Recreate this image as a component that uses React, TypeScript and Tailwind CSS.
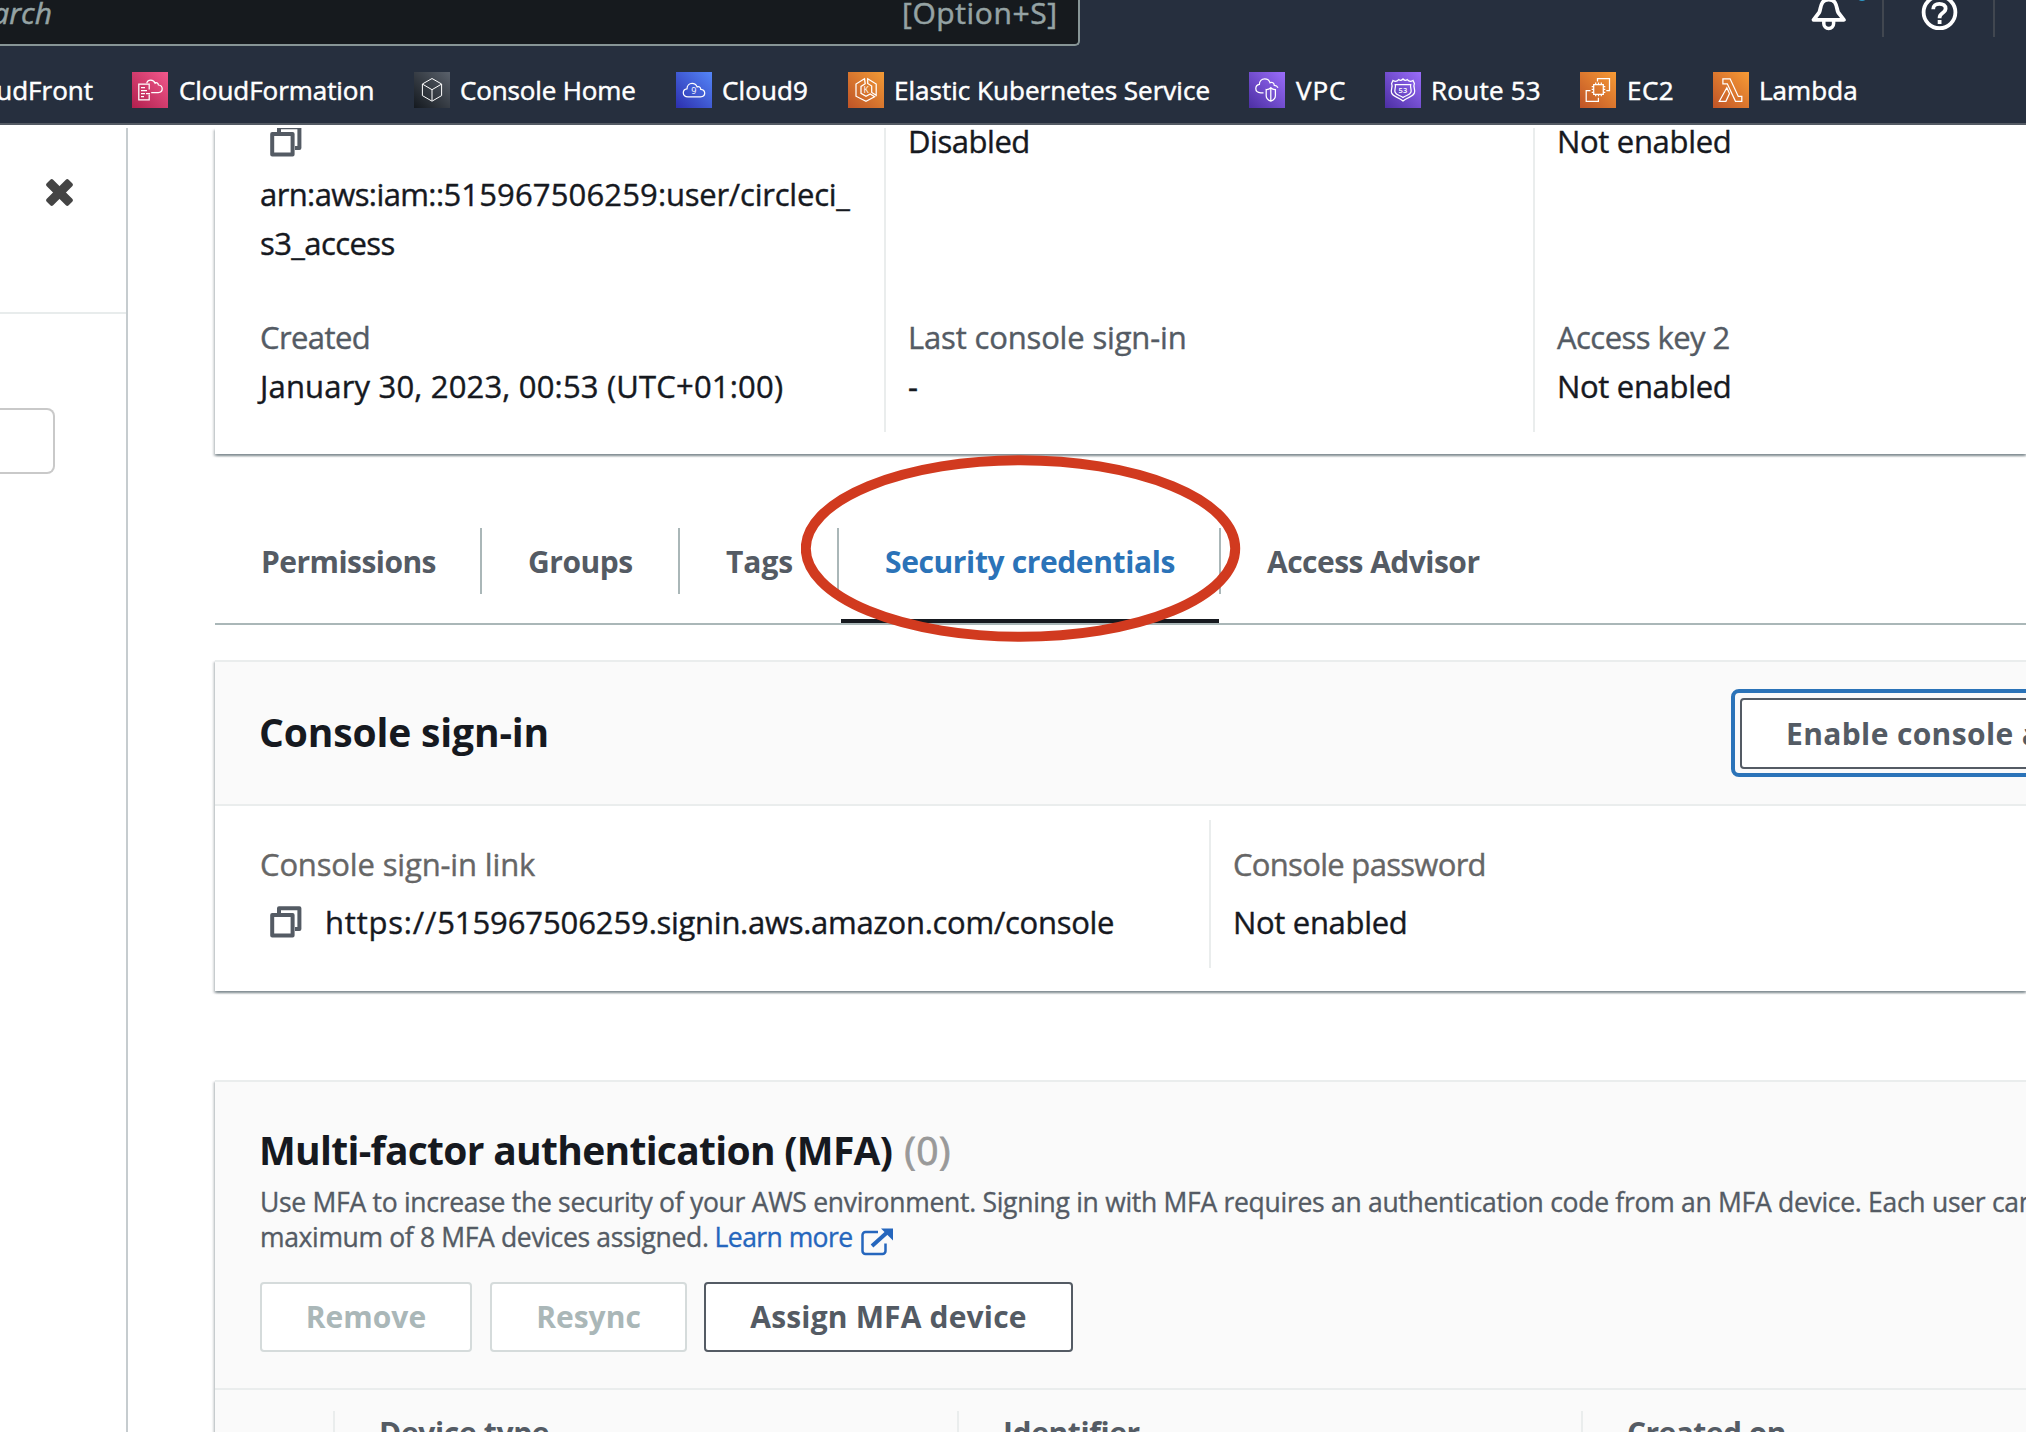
import type { ReactNode } from "react";

type TileProps = { id: string; from: string; to: string; children: ReactNode };

function Tile({ id, from, to, children }: TileProps) {
  return (
    <svg viewBox="0 0 36 36" className="h-9 w-9 shrink-0" fill="none" stroke="#fff" strokeWidth="1.25">
      <defs>
        <linearGradient id={id} x1="0" y1="1" x2="1" y2="0">
          <stop offset="0" stopColor={from} />
          <stop offset="1" stopColor={to} />
        </linearGradient>
      </defs>
      <rect width="36" height="36" fill={`url(#${id})`} stroke="none" />
      {children}
    </svg>
  );
}

const services = [
  {
    name: "CloudFormation",
    box: "w-[282px] gap-[11px]",
    text: "tracking-[-0.05px]",
    icon: (
      <Tile id="cfn" from="#b0204e" to="#f2588c">
        <path d="M17.2 17.5V12.2H6.8v15.6h10.4v-5.3" />
        <path d="M9 15.5h4M9 18.5h6M9 21.5h4M14 21.5h4M9 24.5h3" />
        <path d="M14.8 11.3c.2-2 2-3.3 4-3.3 2 0 3.6 1.300 4.300 3.200 1-.9 3.100-.5 3.300 1.800 2.200.2 3.800 1.600 3.800 3.800s-1.700 3.700-4 3.700h-7" />
      </Tile>
    ),
  },
  {
    name: "Console Home",
    box: "w-[262px] gap-[10px]",
    text: "tracking-[-0.14px]",
    icon: (
      <Tile id="home" from="#14191f" to="#5a616b">
        <path d="M18 6.500l9.600 5.500v11.600L18 29.200l-9.600-5.600V12zM8.800 12.300L18 17.700l9.200-5.400M18 17.700v11" strokeWidth="1" />
      </Tile>
    ),
  },
  {
    name: "Cloud9",
    box: "w-[172px] gap-[10px]",
    text: "tracking-[0.13px]",
    icon: (
      <Tile id="c9" from="#2c2fae" to="#5486f8">
        <path d="M12 24.800c-3 0-4.700-1.600-4.700-4 0-2.300 1.600-3.800 3.700-4 0-3.300 2.300-5.500 5.100-5.500 2.400 0 4.200 1.400 5 3.600 1.800-.9 3.600.3 3.700 2.500 2.300.3 3.900 1.600 3.900 3.700 0 2.300-1.600 3.700-4 3.700z" />
        <text x="18" y="22.300" fill="#fff" stroke="none" fontSize="9" textAnchor="middle">9</text>
      </Tile>
    ),
  },
  {
    name: "Elastic Kubernetes Service",
    box: "w-[401px] gap-[10px]",
    text: "tracking-[0.02px]",
    icon: (
      <Tile id="eks" from="#bf5327" to="#f29b36">
        <path d="M16.500 6.800L8 12v12.200l10 5 8.600-4.400-4.400-2.800-4.200 2.400-5-3v-7l4.200-2.600zM19.700 6.800l8.500 5.200v11.300l-4.500-2.800v-6.400l-4-2.600z" />
        <text x="18" y="21" fill="#fff" stroke="none" fontSize="8.500" textAnchor="middle">K</text>
      </Tile>
    ),
  },
  {
    name: "VPC",
    box: "w-[136px] gap-[11px]",
    text: "tracking-[0.9px]",
    icon: (
      <Tile id="vpc" from="#4c2fa3" to="#9a6dfa">
        <path d="M14.500 20.800h-2.700c-3 0-5-1.500-5-4.200 0-2.300 1.400-3.800 3.600-4.200C10.300 9 12.700 6.900 15.700 6.900c2.700 0 4.600 1.500 5.400 3.900 2.100-1 4 .1 4.200 2.600 1.800.1 3 .9 3.700 2.300" />
        <path d="M17.200 17.500c2 .1 3.400-.6 4.600-1.800 1.200 1.200 2.600 1.900 4.600 1.800v6.300c0 2.700-1.900 4.400-4.600 5.300-2.700-.9-4.600-2.600-4.600-5.300zM21.800 16v13" />
      </Tile>
    ),
  },
  {
    name: "Route 53",
    box: "w-[195px] gap-[10px]",
    text: "tracking-[0.25px]",
    icon: (
      <Tile id="r53" from="#4c2fa3" to="#9a6dfa">
        <path d="M8 8.500c1.900 1.200 4.300.8 5.700-.9 1.300 1 2.900.9 4.300-.6 1.400 1.500 3 1.600 4.300.6 1.400 1.700 3.800 2.100 5.700.9l1.400 3c-1.600 3.500 1.300 6 0 9.500-1.500 4-7 3.900-11.400 8-4.400-4.100-9.900-4-11.400-8-1.300-3.500 1.600-6 0-9.500z" />
        <path d="M10.300 12.500h15.400c-.8 3 1.200 5.200.2 7.700-1.200 3-4.500 2.900-7.900 5.400-3.400-2.500-6.700-2.400-7.900-5.400-1-2.500 1-4.700.2-7.700z" />
        <text x="18" y="21.200" fill="#fff" stroke="none" fontSize="7.500" fontWeight="600" textAnchor="middle">53</text>
      </Tile>
    ),
  },
  {
    name: "EC2",
    box: "w-[133px] gap-[11px]",
    text: "tracking-[0.5px]",
    icon: (
      <Tile id="ec2" from="#bf5327" to="#f79b35">
        <path d="M17.500 9.500V6.700h12v12h-3.200M10.500 18.700H6.200v10.700h12.200v-3.600" />
        <path d="M13.700 12.500h9.600v9.800h-9.600zM15.700 12.500v-2M18.500 12.500v-2M21.300 12.500v-2M15.700 24.300v-2M18.500 24.300v-2M21.300 24.300v-2M13.700 14.500h-2M13.700 17.400h-2M13.700 20.300h-2M25.300 14.500h-2M25.300 17.400h-2M25.300 20.300h-2" />
      </Tile>
    ),
  },
  {
    name: "Lambda",
    box: "w-[150px] gap-[10px]",
    text: "tracking-[0.05px]",
    icon: (
      <Tile id="lambda" from="#bf5327" to="#f79b35">
        <path d="M9.900 6.800h7.200l8.200 17.600h3.500v4.900h-6.300L14.300 11.800H9.900zM13.800 15.800l2.700 5.700-3.600 7.800H6.300z" />
      </Tile>
    ),
  },
];

function CopyIcon() {
  return (
    <svg viewBox="0 0 32 32" className="h-8 w-8 shrink-0" fill="none" stroke="#545b64" strokeWidth="4" strokeLinejoin="round">
      <path d="M9 8V2.200h20.400V23H25" />
      <path d="M2.200 9h20.400v20.400H2.200z" />
    </svg>
  );
}

function TopBar() {
  return (
    <header className="h-[125px] shrink-0 border-b-2 border-[#545b64] bg-[#262f3e]">
      <div className="flex h-[46px]">
        <div className="flex h-[46px] w-[1080px] justify-between rounded-br-[5px] border-r-2 border-b-2 border-[#879596] bg-[#161a1e] text-[30px] leading-[25px] text-[#95a3a4] [-webkit-text-stroke:0.5px]">
          <span className="flex w-[52px] justify-end italic">Search</span>
          <span className="w-[176px] tracking-[0.6px]">[Option+S]</span>
        </div>
        <div className="flex h-[37px] flex-1">
          <div className="relative flex w-[802px] justify-end pr-[33px]">
            <svg viewBox="0 0 40 32" className="h-8 w-10" fill="none" stroke="#fff" strokeWidth="3.800" strokeLinejoin="round">
              <path d="M4.500 19.800l5.700-7.300C12.200 8.500 11 -.5 19.700 -.5s7.500 9 9.500 13l5.700 7.300z" />
              <path d="M14.800 20.500v3a4.900 4.900 0 0 0 9.800 0v-3" strokeWidth="3.500" />
            </svg>
            <span className="absolute top-[-11px] left-[776px] h-3 w-3 rounded-full bg-[#2f9ac8]" />
          </div>
          <div className="flex w-[113px] justify-center border-x-2 border-[#414750]">
            <svg viewBox="0 0 40 32" className="h-8 w-10" fill="none" stroke="#fff" strokeWidth="3.800">
              <circle cx="20.500" cy="12.300" r="15.900" />
              <path d="M14.200 9.200c0-3.600 2.500-5.400 6.200-5.400 3.800 0 6.200 1.900 6.200 4.700 0 4.600-6 4.300-6 8.900v.8" />
              <path d="M20.600 20v4" />
            </svg>
          </div>
        </div>
      </div>
      <nav className="flex pt-[26px] text-[26px] leading-9 font-medium whitespace-nowrap text-white [-webkit-text-stroke:0.5px]">
        <span className="flex w-[132px] justify-end pr-[39px]">CloudFront</span>
        {services.map((s) => (
          <div key={s.name} className={`flex ${s.box} ${s.text}`}>
            {s.icon}
            <span>{s.name}</span>
          </div>
        ))}
      </nav>
    </header>
  );
}

function Sidebar() {
  return (
    <aside className="w-32 shrink-0 border-r-2 border-[#c6cccf]">
      <div className="h-[186px] border-b-2 border-[#e8ecec] pt-[51px] pl-[46px]">
        <svg viewBox="0 0 27 27" className="h-[27px] w-[27px]" fill="#444">
          <rect x="-2" y="9" width="31" height="9" rx="2" transform="rotate(45 13.500 13.500)" />
          <rect x="-2" y="9" width="31" height="9" rx="2" transform="rotate(-45 13.500 13.500)" />
        </svg>
      </div>
      <div className="mt-[94px] h-[66px] w-[55px] rounded-r-[8px] border-y-2 border-r-2 border-[#c9c9c9]" />
    </aside>
  );
}

const panel =
  "shadow-[0_2px_2px_0_rgba(0,28,36,0.3),2px_2px_2px_0_rgba(0,28,36,0.15),-2px_2px_2px_0_rgba(0,28,36,0.15)]";

function Summary() {
  return (
    <section
      className={`flex h-[326px] text-[31px] leading-[49px] text-[#16191f] [-webkit-text-stroke:0.4px] ${panel}`}
    >
      <div className="w-[669px] pl-[45px]">
        <div className="h-[42px] pl-[10px]">
          <div className="-translate-y-[3px]">
            <CopyIcon />
          </div>
        </div>
        <p>
          <span className="tracking-[-0.6px]">arn:aws:iam::</span>
          <span className="tracking-[0.15px]">515967506259</span>
          <span className="tracking-[-0.22px]">:user/circleci_</span>
        </p>
        <p className="tracking-[-0.6px]">s3_access</p>
        <p className="mt-[45px] tracking-[-0.58px] text-[#545b64]">Created</p>
        <p className="tracking-[0.18px]">January 30, 2023, 00:53 (UTC+01:00)</p>
      </div>
      <div className="h-[304px] w-[649px] border-l-2 border-[#eaeded] pl-[22px]">
        <p className="-mt-[11px] tracking-[-0.45px]">Disabled</p>
        <p className="mt-[147px] tracking-[-0.16px] text-[#545b64]">Last console sign-in</p>
        <p>-</p>
      </div>
      <div className="h-[304px] flex-1 border-l-2 border-[#eaeded] pl-[22px]">
        <p className="-mt-[11px] tracking-[-0.32px]">Not enabled</p>
        <p className="mt-[147px] tracking-[-0.55px] text-[#545b64]">Access key 2</p>
        <p className="tracking-[-0.32px]">Not enabled</p>
      </div>
    </section>
  );
}

const tabs = [
  { name: "Permissions", box: "w-[267px] border-r-2 tracking-[-0.55px]" },
  { name: "Groups", box: "w-[198px] border-r-2 tracking-[-0.48px]" },
  { name: "Tags", box: "w-[159px] border-r-2 tracking-[-0.05px]" },
  { name: "Security credentials", box: "w-[382px] border-r-2 text-[#2b73b8] tracking-[-0.38px]", active: true },
  { name: "Access Advisor", box: "w-[320px] tracking-[-0.53px]" },
];

function Tabs() {
  return (
    <div className="relative mt-[74px] flex h-[97px] border-b-2 border-[#aab7b8] text-[30px] leading-[68px] font-bold text-[#545b64]">
      {tabs.map((t) => (
        <div key={t.name} className={`relative h-[66px] border-[#aab7b8] pl-[46px] ${t.box}`}>
          {t.name}
          {t.active && <span className="absolute top-[91px] right-0 left-0.5 h-1 bg-[#16191f]" />}
        </div>
      ))}
      <svg viewBox="0 0 440 187" className="absolute top-[-73px] left-[586px] h-[187px] w-[440px]" fill="none">
        <ellipse cx="219.500" cy="93.500" rx="214.700" ry="88.300" stroke="#d13a1f" strokeWidth="10" />
      </svg>
    </div>
  );
}

function ConsoleSignIn() {
  return (
    <section
      className={`mt-[35px] h-[331px] border-t-2 border-[#eaeded] text-[31px] leading-[49px] text-[#16191f] ${panel}`}
    >
      <div className="flex h-36 justify-between border-b-2 border-[#eaeded] bg-[#fafafa] pl-11">
        <h2 className="mt-[50px] text-[39px] leading-10 font-bold tracking-[-0.15px]">Console sign-in</h2>
        <div className="mt-[27px] mr-[-125px] h-[88px] w-[420px] shrink-0 rounded-[8px] border-4 border-[#2b73b8] px-[5px] pt-[5px]">
          <button className="block h-[71px] w-full rounded-[4px] border-2 border-[#545b64] bg-white pl-[44px] text-left text-[30px] leading-[67px] font-bold tracking-[0.37px] whitespace-nowrap text-[#545b64]">
            Enable console access
          </button>
        </div>
      </div>
      <div className="flex [-webkit-text-stroke:0.4px]">
        <div className="w-[994px] pt-[34px] pl-[45px]">
          <p className="tracking-[-0.15px] text-[#666]">Console sign-in link</p>
          <div className="mt-[9px] flex gap-[23px] pl-[10px]">
            <div className="pt-2">
              <CopyIcon />
            </div>
            <p>
              <span className="tracking-[0.8px]">https://</span>
              <span className="tracking-[-0.1px]">515967506259</span>
              <span className="tracking-[-0.28px]">.signin.aws.amazon.com/console</span>
            </p>
          </div>
        </div>
        <div className="mt-3.5 h-[148px] flex-1 border-l-2 border-[#eaeded] pt-5 pl-[22px]">
          <p className="tracking-[-0.69px] text-[#666]">Console password</p>
          <p className="mt-[9px] tracking-[-0.32px]">Not enabled</p>
        </div>
      </div>
    </section>
  );
}

function Mfa() {
  return (
    <section className={`mt-[89px] h-[500px] border-t-2 border-[#eaeded] bg-[#fafafa] ${panel}`}>
      <div className="h-[308px] border-b-2 border-[#eaeded] pt-12 pl-11 whitespace-nowrap">
        <h2 className="flex text-[39px] leading-10 font-bold text-[#16191f]">
          <span className="tracking-[-0.7px]">Multi-factor authentication (MFA)</span>
          <span className="pl-[12px] font-normal tracking-[0.4px] text-[#999] [-webkit-text-stroke:0.8px]">(0)</span>
        </h2>
        <div className="mt-[15px] ml-px h-[70px] text-[26.5px] leading-[35px] text-[#545b64] [-webkit-text-stroke:0.35px]">
          <p className="tracking-[-0.29px]">
            Use MFA to increase the security of your AWS environment. Signing in with MFA requires an authentication
            code from an MFA device. Each user can have a
          </p>
          <p className="flex tracking-[-0.35px]">
            maximum of 8 MFA devices assigned.
            <a className="ml-[6px] flex gap-[7px] tracking-[-0.55px] text-[#2566bd]">
              Learn more
              <svg viewBox="0 0 34 30" className="mt-[7px] h-[30px] w-[34px]" fill="none" stroke="#2566bd" strokeWidth="2.500">
                <path d="M18 5H5.500A3 3 0 0 0 2.500 8v16a3 3 0 0 0 3 3h17a3 3 0 0 0 3-3v-7.500" />
                <path d="M12 19L27 5.500" strokeWidth="4" />
                <path d="M21 1.500h12v12z" fill="#2566bd" stroke="none" />
              </svg>
            </a>
          </p>
        </div>
        <div className="mt-[27px] ml-px flex text-center text-[30px] leading-[66px] font-bold text-[#aab7b8]">
          <button className="h-[70px] w-[212px] rounded-[4px] border-2 border-[#d5dbdb] bg-white">Remove</button>
          <button className="ml-[18px] h-[70px] w-[197px] rounded-[4px] border-2 border-[#d5dbdb] bg-white">Resync</button>
          <button className="ml-[17px] h-[70px] w-[369px] rounded-[4px] border-2 border-[#545b64] bg-white tracking-[0.17px] text-[#545b64]">
            Assign MFA device
          </button>
        </div>
      </div>
      <div className="flex pt-[21px] pl-[118px] text-[30px] leading-[43px] font-bold text-[#545b64]">
        <div className="w-[624px] border-l-2 border-[#eaeded] pl-11 tracking-[-0.33px]">Device type</div>
        <div className="w-[624px] border-l-2 border-[#eaeded] pl-11 tracking-[-0.39px]">Identifier</div>
        <div className="flex-1 border-l-2 border-[#eaeded] pl-11 tracking-[-0.56px]">Created on</div>
      </div>
    </section>
  );
}

export default function App() {
  return (
    <div className="flex h-[1432px] w-[2026px] flex-col overflow-hidden bg-white font-['Open_Sans',sans-serif]">
      <TopBar />
      <div className="mt-[3px] flex h-[1304px] overflow-hidden">
        <Sidebar />
        <main className="w-[1898px] shrink-0 pl-[87px]">
          <Summary />
          <Tabs />
          <ConsoleSignIn />
          <Mfa />
        </main>
      </div>
    </div>
  );
}
